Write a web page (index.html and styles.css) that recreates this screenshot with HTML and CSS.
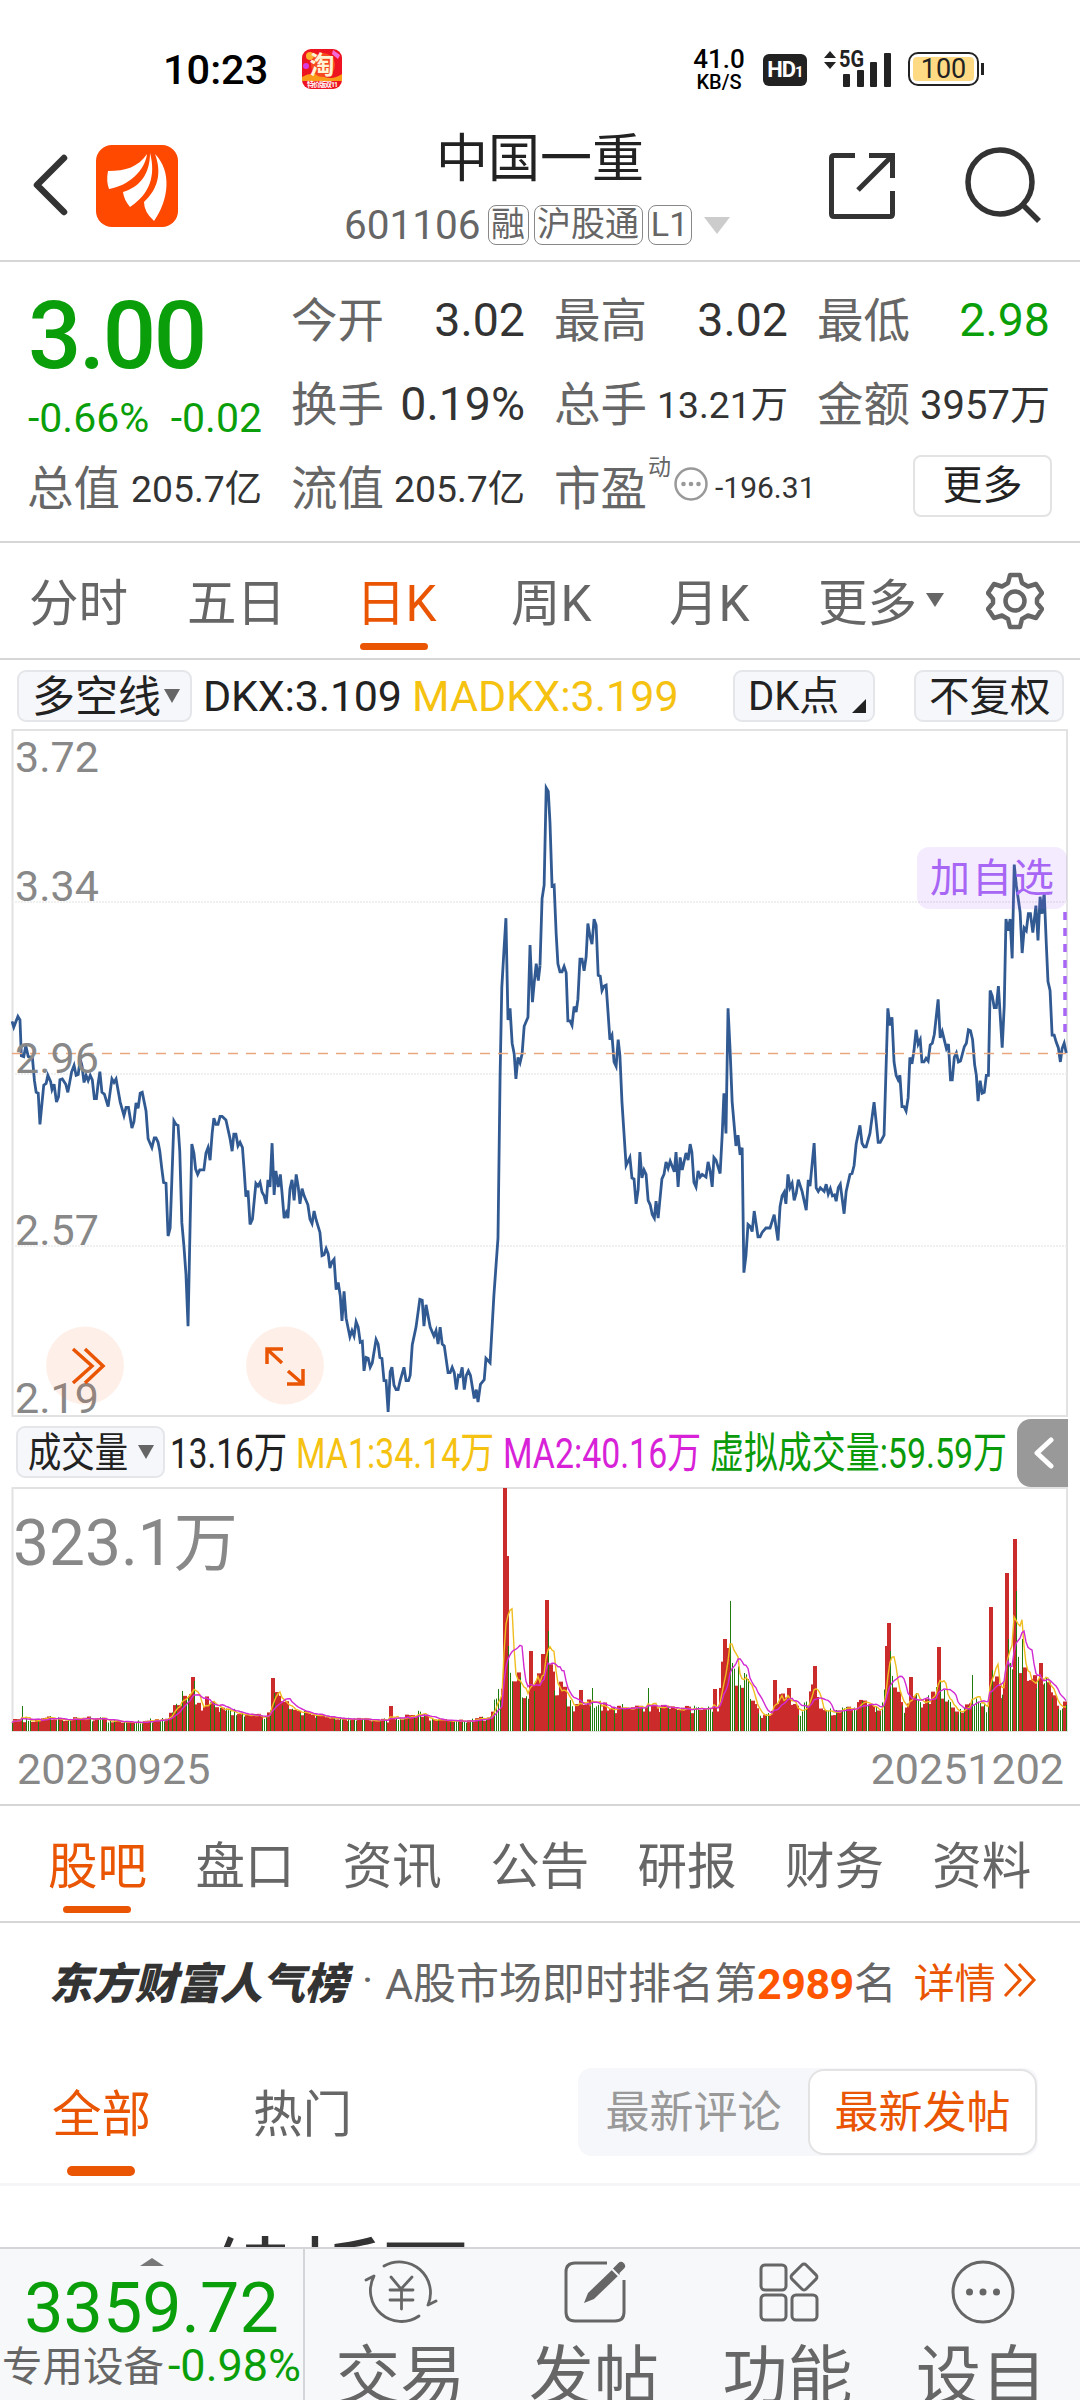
FILE: index.html
```html
<!DOCTYPE html>
<html lang="zh-CN">
<head>
    <meta charset="UTF-8">
    <meta name="viewport" content="width=device-width, initial-scale=1.0">
    <title>中国一重 601106</title>
    <link rel="stylesheet" href="styles.css">
</head>
<body>
    <div class="status">
        <span class="clock">10:23</span>
        <svg class="app-badge" width="40" height="40" viewBox="0 0 40 40">
            <rect width="40" height="40" rx="9" fill="#ee1320"/>
            <path d="M0 28Q10 22 20 27T40 25V32H0Z" fill="#fb9a18"/>
            <circle cx="8" cy="7" r="4" fill="#ffb02e"/>
            <circle cx="4" cy="17" r="3" fill="#d63be0"/>
            <path d="M31 1l7 5-2 4-6-5z" fill="#f46ad6"/>
            <circle cx="21" cy="16" r="12" fill="#f8481f"/>
            <text x="20" y="25" font-size="25" font-weight="700" fill="#fff3d6" text-anchor="middle">淘</text>
            <text x="20.500" y="38" font-size="7" font-weight="700" fill="#fff" text-anchor="middle" textLength="31">特价版双11</text>
        </svg>
        <div class="speed"><b>41.0</b><span>KB/S</span></div>
        <div class="hd">HD<small>1</small></div>
        <svg class="signal" width="70" height="40" viewBox="0 0 70 40" fill="#222">
            <path d="M0 9L6 2l6 7zM0 13h12l-6 7z"/>
            <text x="15" y="18" font-size="23" font-weight="700" textLength="25" lengthAdjust="spacingAndGlyphs">5G</text>
            <rect x="19" y="25" width="7" height="13" rx="1"/>
            <rect x="33" y="21" width="7" height="17" rx="1"/>
            <rect x="46" y="13" width="7" height="25" rx="1"/>
            <rect x="60" y="4" width="7" height="34" rx="1"/>
        </svg>
        <div class="battery"><span>100</span></div>
    </div>

    <div class="header">
        <svg class="back" width="36" height="62" viewBox="0 0 36 62" fill="none" stroke="#333" stroke-width="6.500" stroke-linecap="round" stroke-linejoin="round"><path d="M31 4L4 31l27 27"/></svg>
        <svg class="logo" width="82" height="82" viewBox="0 0 82 82">
            <rect width="82" height="82" rx="16" fill="#ff4800"/>
            <g fill="#fff">
                <path d="M51 9C49 26 32 41 13 44Q10 36 12 26C30 26 42 22 51 9Z"/>
                <path d="M54 8C60 30 54 49 34 62Q28 55 27 47C44 42 54 29 54 8Z"/>
                <path d="M59 9C76 26 73 55 58 76Q48 67 48 57C62 44 66 28 59 9Z"/>
            </g>
        </svg>
        <div class="title">
            <div class="name">中国一重</div>
            <div class="code">601106<i class="tag t1">融</i><i class="tag t2">沪股通</i><i class="tag t3">L1</i><i class="drop"></i></div>
        </div>
        <svg class="share" width="66" height="66" viewBox="0 0 66 66" fill="none" stroke="#333" stroke-width="5">
            <path d="M26 2.500H5Q2.500 2.500 2.500 5v56q0 2.500 2.500 2.500h56q2.500 0 2.500-2.500V38M40 2.500h23.500V25M63 3L29 37"/>
        </svg>
        <svg class="search" width="78" height="78" viewBox="0 0 78 78" fill="none" stroke="#333" stroke-width="5.500">
            <circle cx="35" cy="35" r="32"/><path d="M58 58l16 16"/>
        </svg>
    </div>

    <div class="quote">
        <div class="price">
            <div class="last">3.00</div>
            <div class="change"><span>-0.66%</span><span>-0.02</span></div>
        </div>
        <div class="cell"><label>今开</label><b>3.02</b></div>
        <div class="cell"><label>最高</label><b>3.02</b></div>
        <div class="cell"><label>最低</label><b class="green">2.98</b></div>
        <div class="cell"><label>换手</label><b>0.19%</b></div>
        <div class="cell"><label>总手</label><b class="s37">13.21万</b></div>
        <div class="cell"><label>金额</label><b class="s40">3957万</b></div>
        <div class="cell"><label>总值</label><b class="s37">205.7亿</b></div>
        <div class="cell"><label>流值</label><b class="s37">205.7亿</b></div>
        <div class="cell pe">
            <label>市盈</label><sup>动</sup>
            <svg width="36" height="36" viewBox="0 0 36 36"><circle cx="18" cy="18" r="15.500" fill="none" stroke="#999" stroke-width="2.500"/><g fill="#999"><circle cx="10.500" cy="18" r="2.300"/><circle cx="18" cy="18" r="2.300"/><circle cx="25.500" cy="18" r="2.300"/></g></svg>
            <b>-196.31</b>
        </div>
        <div class="cell last-cell"><button class="more">更多</button></div>
    </div>

    <div class="periods">
        <span>分时</span>
        <span>五日</span>
        <span class="active">日K</span>
        <span>周K</span>
        <span>月K</span>
        <span>更多<i class="drop"></i></span>
        <svg width="58" height="58" viewBox="0 0 58 58" fill="none" stroke="#666" stroke-width="4.500" stroke-linejoin="round">
            <path d="M24 3h10l2 8 6 3.500 8-2.500 6 9-5 6v4l5 6-6 9-8-2.500-6 3.500-2 8H24l-2-8-6-3.500L8 46l-6-9 5-6v-4l-5-6 6-9 8 2.500 6-3.500z"/>
            <circle cx="29" cy="29" r="9.500"/>
        </svg>
    </div>

    <div class="indicator">
        <div class="chip c1"><span>多空线</span><i class="drop"></i></div>
        <span class="dkx">DKX:3.109</span>
        <span class="madkx">MADKX:3.199</span>
        <div class="chip c2"><span>DK点</span><i class="corner"></i></div>
        <div class="chip c3"><span>不复权</span></div>
    </div>

    <svg class="chart" width="1080" height="688" viewBox="0 0 1080 688">
        <path d="M12.500 1V687H1067V1Z" fill="none" stroke="#e2e2e2" stroke-width="2"/>
        <path d="M12 173H1067M12 345H1067M12 517H1067" stroke="#ececec" stroke-width="1.500" stroke-dasharray="2 1"/>
        <g fill="none" stroke="#315a92" stroke-width="2.800">
            <polyline vector-effect="non-scaling-stroke" transform="translate(0 -9) scale(.3444 .4464)" points="35,675 40,688 52,664 58,672 62,752 69,754 75,730 82,754 94,756 100,808 105,834 111,836 116,906 127,818 134,814 139,796 147,810 151,828 157,816 164,856 170,844 174,806 181,804 191,816 197,834 208,788 215,774 221,796 227,794 233,760 238,774 244,812 250,796 256,808 262,796 268,806 274,848 280,848 285,814 290,788 296,834 303,838 314,866 325,804 331,812 337,804 349,856 360,886 366,868 373,868 383,914 389,900 395,858 401,870 407,836 413,834 424,876 430,938 441,958 448,936 453,936 459,946 464,966 470,1006 475,1036 482,1038 488,1156 494,1138 499,1030 505,898 511,906 517,908 522,966 528,1126 534,1178 540,1242 546,1358 552,1130 557,950 563,970 568,1006 574,1018 580,1008 592,1008 598,970 604,958 610,986 616,926 621,892 627,906 633,906 639,888 645,888 656,896 668,938 674,966 679,928 685,928 691,954 697,946 704,958 709,1010 714,1068 720,1054 726,1130 733,1118 743,1038 749,1044 755,1036 761,1058 767,1066 773,1084 778,1030 784,1046 790,948 796,1064 801,1010 808,1046 814,1018 819,1060 825,1116 831,1104 836,1116 842,1050 848,1030 854,1076 860,1018 866,1046 871,1084 877,1050 883,1066 894,1086 900,1118 906,1128 912,1100 918,1120 929,1148 935,1200 941,1198 947,1184 953,1196 958,1228 964,1214 970,1208 976,1276 982,1260 988,1290 993,1346 999,1280 1005,1340 1016,1382 1022,1368 1028,1380 1034,1348 1040,1360 1046,1394 1052,1392 1057,1458 1063,1428 1069,1430 1075,1450 1081,1440 1092,1388 1098,1398 1103,1428 1109,1430 1115,1480 1121,1480 1127,1550 1133,1460 1138,1450 1144,1490 1150,1500 1156,1500 1162,1480 1173,1450 1179,1480 1186,1480 1191,1468 1197,1400 1208,1360 1219,1298 1226,1300 1231,1358 1237,1310 1249,1360 1260,1380 1266,1368 1272,1398 1278,1360 1284,1398 1290,1402 1301,1462 1307,1462 1313,1450 1319,1462 1325,1500 1331,1468 1336,1470 1342,1450 1348,1500 1354,1468 1360,1458 1366,1468 1377,1520 1383,1500 1388,1528 1395,1488 1406,1478 1411,1430 1423,1440 1434,1290 1446,1160 1452,800 1457,600 1463,520 1469,444 1475,672 1481,646 1487,724 1493,748 1498,804 1504,756 1510,768 1516,748 1522,686 1533,666 1539,504 1546,632 1551,590 1557,546 1563,584 1568,550"/>
            <polyline vector-effect="non-scaling-stroke" transform="translate(540 -9) scale(.3444 .4464)" points="0,550 6,400 12,370 18,152 24,160 29,230 35,372 41,370 47,480 52,546 58,564 64,564 70,552 76,566 81,674 87,674 93,684 99,642 105,654 110,626 116,536 122,536 128,562 134,530 139,456 145,484 151,502 157,446 163,460 169,572 175,574 180,606 186,596 192,594 198,660 203,716 209,706 215,766 221,776 227,716 232,752 238,856 250,998 261,980 267,1026 273,1028 279,1084 285,1052 290,968 296,1026 302,1008 308,1018 314,1076 320,1086 326,1108 332,1116 337,1078 343,1116 354,1028 360,1018 366,990 372,1004 378,988 390,1012 395,968 401,1046 407,980 413,1008 424,970 430,986 436,950 441,968 447,1036 453,1046 459,1010 465,1024 471,1018 482,1024 488,990 494,1010 500,1046 505,980 511,986 523,1016 529,930 534,836 540,926 546,646 552,740 558,856 569,954 575,930 581,974 587,958 592,1238 598,1200 604,1130 610,1134 616,1146 622,1100 633,1158 639,1158 645,1148 656,1138 668,1138 680,1108 691,1166 697,1090 703,1066 709,1058 714,1084 720,1018 726,1048 732,1038 738,1076 744,1060 750,1030 761,1056 773,1098 779,1030 784,1044 796,948 802,1048 808,1056 814,1048 825,1056 831,1040 837,1062 843,1050 849,1066 855,1064 860,1078 866,1048 872,1040 878,1076 883,1106 889,1056 900,1018 906,1016 912,998 918,950 929,908 935,948 941,956 947,956 958,926 970,856 976,900 982,946 988,946 999,930 1010,646 1016,684 1022,666 1028,766 1034,796 1040,806 1045,796 1051,866 1057,866 1063,876 1069,846 1074,756 1080,770 1086,740 1092,694 1098,726 1104,716 1109,766 1115,766 1121,758 1127,764 1133,728 1139,724 1145,704 1156,626 1162,712 1168,698 1180,736 1186,726 1192,806 1197,806 1203,756 1209,746 1215,766 1221,764 1232,732 1238,724 1244,694 1250,696 1256,716 1262,772 1267,796 1272,854 1278,808 1284,836 1290,834 1296,796 1302,796 1307,606 1313,618 1319,644 1325,644 1331,596 1342,734 1348,640 1353,446 1359,472 1365,446 1371,534 1377,324 1383,370 1394,430 1400,522 1406,466 1412,472 1418,434 1424,434 1431,476 1440,416 1446,494 1452,396 1458,434 1464,386 1470,500 1475,586 1481,606 1487,706 1493,706 1499,722 1505,734 1511,766 1516,736 1522,724 1528,746"/>
        </g>
        <path d="M12 324.500H1067" stroke="#e8a77c" stroke-width="1.500" stroke-dasharray="10 8"/>
        <g fill="#888" font-size="43">
            <text x="15" y="43">3.72</text>
            <text x="15" y="172">3.34</text>
            <text x="15" y="344">2.96</text>
            <text x="15" y="516">2.57</text>
            <text x="15" y="684">2.19</text>
        </g>
        <rect x="917" y="118" width="150" height="62" rx="12" fill="rgba(168,100,245,.12)"/>
        <text x="930" y="163" font-size="40" fill="#a866f5" textLength="124">加自选</text>
        <path d="M1065 183V304" stroke="#a866f5" stroke-width="3.500" stroke-dasharray="8 8"/>
        <g fill="rgba(250,110,40,.1)"><circle cx="85" cy="636.500" r="39"/><circle cx="285" cy="636.500" r="39"/></g>
        <g fill="none" stroke="#ea5504" stroke-width="3.500">
            <path d="M73 620l19 17-19 17M85 620l18 17-18 17"/>
            <path d="M267 635V620h16M268 621l14 13M288 642l15 13M303 640v15h-16"/>
        </g>
    </svg>

    <div class="volume-head">
        <div class="chip"><svg width="102" height="50"><text x="0" y="40" font-size="41" fill="#222" textLength="100" lengthAdjust="spacingAndGlyphs">成交量</text></svg><i class="drop"></i></div>
        <svg width="852" height="70" font-size="43">
            <text x="5" y="51" fill="#222" textLength="117" lengthAdjust="spacingAndGlyphs">13.16万</text>
            <text x="131" y="51" fill="#f5c211" textLength="198" lengthAdjust="spacingAndGlyphs">MA1:34.14万</text>
            <text x="338" y="51" fill="#d822d8" textLength="198" lengthAdjust="spacingAndGlyphs">MA2:40.16万</text>
            <text x="545" y="51" fill="#0a9a0a" textLength="297" lengthAdjust="spacingAndGlyphs">虚拟成交量:59.59万</text>
        </svg>
        <div class="fold"><svg width="22" height="32" viewBox="0 0 22 32" fill="none" stroke="#fff" stroke-width="5" stroke-linecap="round" stroke-linejoin="round"><path d="M18 3L4 16l14 13"/></svg></div>
    </div>

    <svg class="volume" width="1080" height="245" viewBox="0 0 1080 245">
        <path d="M12.500 1V244.500H1067V1Z" fill="none" stroke="#e2e2e2" stroke-width="2"/>
        <text x="13" y="78" font-size="64" fill="#888">323.1万</text>
        <g id="bars"></g>
    </svg>

    <div class="dates"><span>20230925</span><span>20251202</span></div>

    <div class="tabs">
        <span class="active">股吧</span>
        <span>盘口</span>
        <span>资讯</span>
        <span>公告</span>
        <span>研报</span>
        <span>财务</span>
        <span>资料</span>
    </div>

    <div class="rank">
        <strong>东方财富人气榜</strong>
        <span class="dot">·</span>
        <span>A股市场即时排名第<em>2989</em>名</span>
        <span class="detail">详情</span>
        <svg width="34" height="36" viewBox="0 0 34 36" fill="none" stroke="#ea5504" stroke-width="3"><path d="M2 2l15 16L2 34M16 2l15 16-15 16"/></svg>
    </div>

    <div class="filter">
        <span class="active">全部</span>
        <span>热门</span>
        <div class="segment"><span>最新评论</span><span class="on">最新发帖</span></div>
    </div>

    <div class="feed">续折下</div>

    <div class="bottom">
        <div class="index">
            <i class="up"></i>
            <div class="point">3359.72</div>
            <div class="sector">专用设备<b>-0.98%</b></div>
        </div>
        <div class="item">
            <svg width="76" height="66" viewBox="0 0 76 66" fill="none" stroke="#666" stroke-width="2.800" stroke-linecap="round" stroke-linejoin="round">
                <path d="M20 7A31 31 0 0 1 64 46l8-4M55 57A31 31 0 0 1 10 17L2 21"/>
                <path d="M27 18l10 12 11-12M26 31h23M26 41h23M37.500 30v20"/>
            </svg>
            <span>交易</span>
        </div>
        <div class="item">
            <svg width="62" height="66" viewBox="0 0 62 66" fill="none" stroke="#666" stroke-width="3">
                <path d="M43 4H11Q2 4 2 13v40q0 9 9 9h40q9 0 9-9V21"/>
                <path d="M20 44l4-10 26-25 6 6-26 25z" fill="#666" stroke="none"/>
                <path d="M53 11l4-4" stroke-width="8" stroke-linecap="round"/>
                <path d="M47 9l8 8" stroke="#f6f8fa" stroke-width="2"/>
            </svg>
            <span>发帖</span>
        </div>
        <div class="item">
            <svg width="60" height="66" viewBox="0 0 60 66" fill="none" stroke="#666" stroke-width="3">
                <rect x="2" y="6" width="25" height="25" rx="4"/>
                <rect x="2" y="36" width="25" height="25" rx="4"/>
                <rect x="33" y="36" width="25" height="25" rx="4"/>
                <rect x="35" y="8" width="20" height="20" rx="3" transform="rotate(45 45 18)"/>
            </svg>
            <span>功能</span>
        </div>
        <div class="item">
            <svg width="64" height="66" viewBox="0 0 64 66"><circle cx="32" cy="33" r="30" fill="none" stroke="#666" stroke-width="3"/><g fill="#666"><circle cx="18.500" cy="33" r="3.500"/><circle cx="32" cy="33" r="3.500"/><circle cx="45.500" cy="33" r="3.500"/></g></svg>
            <span>设自</span>
        </div>
    </div>

    <script>
        // volume levels along the x axis: [x, height]
        const levels = [
            [12,11],[30,11],[45,14],[60,13],[80,13],[100,12],[120,10],[135,9],[150,11],[165,12],[171,20],[175,28],[180,32],[186,38],[190,42],[196,34],[200,24],
            [207,33],[220,22],[235,20],[250,15],[265,15],[269,20],[277,36],[284,29],[296,24],[310,15],[340,13],[360,12],[395,11],[420,19],[430,11],[460,10],
            [485,13],[490,16],[494,33],[501,42],[509,63],[514,46],[518,58],[522,42],[526,36],[530,46],[536,52],[540,50],[551,60],[555,42],[563,48],[568,30],
            [575,25],[585,28],[600,27],[610,22],[625,25],[640,22],[660,23],[685,23],[700,24],[718,20],[721,60],[726,75],[734,60],[744,54],[750,42],[756,20],
            [765,15],[772,22],[780,35],[790,26],[800,20],[809,34],[813,50],[818,20],[835,20],[850,22],[862,32],[880,20],[884,50],[892,58],[897,38],[905,20],
            [915,34],[925,28],[935,40],[943,42],[948,28],[960,20],[975,30],[987,24],[993,60],[1000,40],[1006,60],[1011,84],[1018,70],[1023,66],[1028,50],
            [1040,48],[1048,50],[1055,32],[1060,25],[1067,34]
        ];
        // single tall bars: [x, height, red]
        const spikes = [
            [22,25,0],[182,40,0],[192,54,1],[194,50,0],[272,53,1],[274,38,0],[390,25,1],[504,243,1],[506,175,1],[508,85,0],[530,80,1],[542,77,1],[546,131,1],
            [548,100,0],[580,41,1],[592,43,0],[648,43,0],[714,42,1],[724,92,1],[728,83,1],[730,130,0],[732,68,0],[744,58,0],[774,51,1],[788,43,1],[814,65,1],
            [886,85,1],[888,108,1],[890,80,0],[910,54,1],[938,84,1],[940,50,0],[972,56,0],[990,124,1],[1006,158,1],[1008,92,0],[1014,192,1],[1016,140,0],
            [1022,92,0],[1040,68,1],[1046,54,0]
        ];
        let seed = 17;
        function rand() {
            seed = (seed * 16807) % 2147483647;
            return seed / 2147483647;
        }
        const vols = [];
        let html = '';
        for (let x = 12; x <= 1066; x += 2) {
            const i = levels.findIndex(p => p[0] > x);
            const a = levels[i - 1], b = levels[i];
            let h = (a[1] + (b[1] - a[1]) * (x - a[0]) / (b[0] - a[0])) * (0.75 + rand() * 0.4);
            let red = rand() > 0.4;
            const s = spikes.find(p => p[0] === x);
            if (s) {
                h = s[1];
                red = s[2] === 1;
            }
            vols.push([x, h]);
            html += red
                ? `<rect x="${x - 1}" y="${244 - h}" width="4" height="${h}" fill="#cc2b2b"/>`
                : `<rect x="${x}" y="${244 - h}" width="1" height="${h}" fill="#1f7d10"/>`;
        }
        function average(n, color) {
            const pts = vols.map((v, i) => {
                const part = vols.slice(Math.max(0, i - n + 1), i + 1);
                return v[0] + ',' + (244 - part.reduce((t, p) => t + p[1], 0) / part.length).toFixed(1);
            });
            return `<polyline points="${pts.join(' ')}" fill="none" stroke="${color}" stroke-width="1.400"/>`;
        }
        html += average(5, '#f0bd20') + average(10, '#d22bd2');
        document.getElementById('bars').innerHTML = html;
    </script>
</body>
</html>
```

FILE: styles.css
```css
* {
    box-sizing: border-box;
}

body {
    margin: 0;
    width: 1080px;
    height: 2400px;
    overflow: hidden;
    display: flex;
    flex-direction: column;
    background-color: #fff;
    color: #333;
    font-family: Roboto, "Noto Sans CJK SC", sans-serif;
}

body > * {
    flex-shrink: 0;
}

svg {
    display: block;
    flex-shrink: 0;
}

b, i, em {
    font-style: normal;
    font-weight: 400;
}

.green { color: #0a9f0a; }

.drop {
    width: 0;
    height: 0;
    border: 8px solid transparent;
    border-top: 14px solid #666;
    border-bottom: 0;
}

/* status bar */
.status {
    height: 100px;
    padding: 38px 0 0 163px;
    display: flex;
    align-items: center;
    color: #000;
}

.clock {
    width: 139px;
    font-size: 41.5px;
    font-weight: 500;
}

.speed {
    width: 54px;
    margin-left: 350px;
    display: flex;
    flex-direction: column;
    align-items: center;
    font-size: 20px;
    line-height: 20px;
    font-weight: 500;
}

.speed b {
    font-size: 26px;
    line-height: 25px;
    font-weight: 500;
}

.hd {
    width: 44px;
    height: 32px;
    margin: 2px 17px 0 17px;
    border-radius: 6px;
    background-color: #222;
    color: #fff;
    font-size: 22px;
    font-weight: 700;
    line-height: 32px;
    text-align: center;
    white-space: nowrap;
    letter-spacing: -1px;
}

.hd small { font-size: 15px; }

.battery {
    position: relative;
    width: 71px;
    height: 34px;
    margin-left: 14px;
    padding: 3px;
    border: 2.5px solid #222;
    border-radius: 10px;
}

.battery span {
    display: block;
    height: 24px;
    border-radius: 4px;
    background-color: #ffda85;
    color: #222;
    font-size: 27px;
    line-height: 24px;
    text-align: center;
}

.battery::after {
    content: "";
    position: absolute;
    right: -7px;
    top: 9px;
    width: 3px;
    height: 12px;
    background-color: #222;
}

/* title bar */
.header {
    height: 162px;
    display: flex;
    align-items: flex-start;
    border-bottom: 2px solid #d6d6d6;
}

.back { margin: 54px 0 0 33px; }
.logo { margin: 45px 0 0 27px; }

.title {
    width: 387px;
    margin: 24px 0 0 166px;
}

.name {
    margin-left: 92px;
    font-size: 52px;
    line-height: 72px;
    color: #222;
}

.code {
    display: flex;
    align-items: center;
    height: 60px;
    margin-top: -1px;
    font-size: 40.5px;
    color: #666;
}

.tag {
    height: 40px;
    margin-left: 5px;
    border: 1.5px solid #888;
    border-radius: 8px;
    font-size: 34px;
    line-height: 36px;
    text-align: center;
}

.t1 { width: 41px; margin-left: 7px; }
.t2 { width: 109px; }
.t3 { width: 44px; }

.code .drop {
    margin-left: 12px;
    border-width: 17px 13px 0;
    border-top-color: #ccc;
}

.share { margin: 53px 0 0 98px; }
.search { margin: 47px 0 0 70px; }

/* quote */
.quote {
    height: 281px;
    padding: 15px 0 0 28px;
    display: grid;
    grid-template-columns: 234px 233px 233px 232px;
    grid-template-rows: 84px 84px 84px;
    column-gap: 30px;
    border-bottom: 2px solid #d6d6d6;
}

.price {
    grid-row: span 2;
    color: #0a9f0a;
}

.last {
    height: 116px;
    font-size: 94px;
    line-height: 118px;
    font-weight: 500;
    letter-spacing: -2.4px;
}

.change {
    display: flex;
    justify-content: space-between;
    font-size: 41px;
    line-height: 50px;
}

.cell {
    display: flex;
    align-items: center;
    justify-content: space-between;
    font-size: 46.5px;
    white-space: nowrap;
}

.cell label {
    margin: -5px 0 0 -1px;
    color: #666;
}

.cell b { margin-top: 1px; }

.cell .s37 {
    margin-top: -3px;
    font-size: 37.3px;
}

.cell .s40 {
    margin-top: -3px;
    font-size: 40px;
}

.pe {
    justify-content: flex-start;
}

.pe sup {
    align-self: flex-start;
    margin: 6px 2px 0 1px;
    font-size: 23px;
    line-height: 34px;
    color: #666;
}

.pe svg { margin-top: -6px; }

.pe b {
    margin-left: 6px;
    font-size: 30px;
}

.last-cell { justify-content: flex-end; }

.more {
    width: 139px;
    height: 62px;
    margin: -3px -2px 0 0;
    padding: 0;
    border: 2px solid #e3e3e3;
    border-radius: 8px;
    background-color: #fff;
    color: #222;
    font-family: inherit;
    font-size: 40px;
    line-height: 58px;
}

/* chart periods */
.periods {
    height: 117px;
    display: grid;
    grid-template-columns: 158px 169px 155px 158px 149px 168px 58px;
    padding-left: 29px;
    align-items: center;
    border-bottom: 2px solid #d6d6d6;
    font-size: 49.5px;
    color: #666;
}

.periods span {
    position: relative;
    height: 115px;
    line-height: 122px;
}

.periods .drop {
    position: absolute;
    left: 108px;
    top: 50px;
    border-width: 14px 9px 0;
}

.active { color: #ea5504; }

.active::after {
    content: "";
    position: absolute;
    left: 0;
    bottom: 8px;
    width: 68px;
    height: 7px;
    border-radius: 4px;
    background-color: #ea5504;
}

.periods .active::after { left: 4px; }

/* indicator bar */
.indicator {
    height: 69px;
    display: flex;
    align-items: center;
    padding: 2px 0 0 17px;
    font-size: 43px;
    white-space: nowrap;
    color: #222;
}

.chip {
    height: 52px;
    display: flex;
    align-items: center;
    border: 2px solid #e4e6ea;
    border-radius: 9px;
    background-color: #f6f7fa;
}

.indicator .chip span { margin-top: -5px; }

.c1 {
    width: 175px;
    padding-left: 13px;
    font-size: 43px;
}

.c1 .drop { margin-left: 3px; }
.dkx { width: 209px; margin-left: 11px; letter-spacing: -.2px; }
.madkx { width: 321px; color: #f5c211; }
.c2 { width: 142px; padding-left: 13px; font-size: 40px; }

.corner {
    margin: 20px 0 0 13px;
    border-left: 14px solid transparent;
    border-bottom: 14px solid #222;
}

.c3 { width: 150px; margin-left: 39px; padding-left: 13px; font-size: 40.5px; }

.volume-head {
    height: 70px;
    display: flex;
    align-items: center;
    padding-left: 16px;
}

.volume-head .chip {
    width: 149px;
    padding-left: 10px;
}

.volume-head .chip .drop { margin-left: 8px; }

.fold {
    width: 51px;
    height: 68px;
    margin-top: 2px;
    padding-left: 16px;
    display: flex;
    align-items: center;
    border-radius: 14px 0 0 14px;
    background-color: #999;
}

.dates {
    height: 72px;
    display: flex;
    justify-content: space-between;
    padding: 0 16px 0 17px;
    font-size: 43px;
    line-height: 75px;
    color: #888;
}

/* section tabs */
.tabs {
    height: 119px;
    display: grid;
    grid-template-columns: repeat(7, 147.4px);
    padding-left: 48px;
    border-top: 2px solid #d6d6d6;
    border-bottom: 2px solid #d6d6d6;
    font-size: 49.5px;
    line-height: 123px;
    color: #666;
}

.tabs span {
    position: relative;
    height: 115px;
}

.tabs .active::after { left: 15px; }

.rank {
    height: 121px;
    display: flex;
    align-items: center;
    padding: 0 0 7px 49px;
    font-size: 43px;
    white-space: nowrap;
    color: #666;
}

.rank strong {
    width: 313px;
    font-weight: 900;
    font-style: italic;
    letter-spacing: -.4px;
    color: #333;
}

.rank .dot { width: 23px; }

.rank em {
    font-weight: 700;
    letter-spacing: -.5px;
    color: #ff5500;
}

.rank .detail {
    margin: 0 7px 0 17px;
    font-size: 41px;
    color: #ea5504;
}

.filter {
    height: 142px;
    display: flex;
    border-bottom: 3px solid #f6f6f8;
    padding-left: 52px;
    font-size: 49.5px;
    line-height: 143px;
    color: #666;
}

.filter > span {
    position: relative;
    width: 201px;
    height: 139px;
}

.filter .active::after {
    left: 15px;
    bottom: 7px;
    height: 10px;
    border-radius: 5px;
}

.segment {
    width: 460px;
    height: 88px;
    margin: 24px 0 0 124px;
    padding: 1px;
    display: flex;
    border-radius: 14px;
    background-color: #f6f7fa;
    font-size: 44px;
    line-height: 88px;
    color: #999;
    text-align: center;
}

.segment span { width: 229px; }

.segment .on {
    width: 229px;
    border: 2px solid #e3e3e3;
    border-radius: 16px;
    background-color: #fff;
    color: #ea5504;
    line-height: 84px;
}

.feed {
    height: 61px;
    padding: 42px 0 0 208px;
    overflow: hidden;
    font-size: 87px;
    line-height: 104px;
}

/* bottom bar */
.bottom {
    flex: 1;
    display: flex;
    overflow: hidden;
    border-top: 2px solid #d3d5d8;
    background-color: #f6f8fa;
    color: #666;
}

.index {
    width: 305px;
    display: flex;
    flex-direction: column;
    align-items: center;
    border-right: 2px solid #d3d5d8;
    white-space: nowrap;
}

.up {
    margin-top: 9px;
    border: 12px solid transparent;
    border-top: 0;
    border-bottom: 8px solid #777;
}

.point {
    margin-top: 3px;
    font-size: 70px;
    line-height: 78px;
    color: #0a9f0a;
}

.sector {
    font-size: 40.5px;
    line-height: 37px;
}

.sector b {
    margin-left: 4px;
    font-size: 45px;
    color: #0a9f0a;
}

.item {
    width: 193.6px;
    display: flex;
    flex-direction: column;
    align-items: center;
    padding-top: 10px;
    font-size: 65px;
    line-height: 90px;
}

.item span {
    margin: 7px 3px 0 0;
}
```
